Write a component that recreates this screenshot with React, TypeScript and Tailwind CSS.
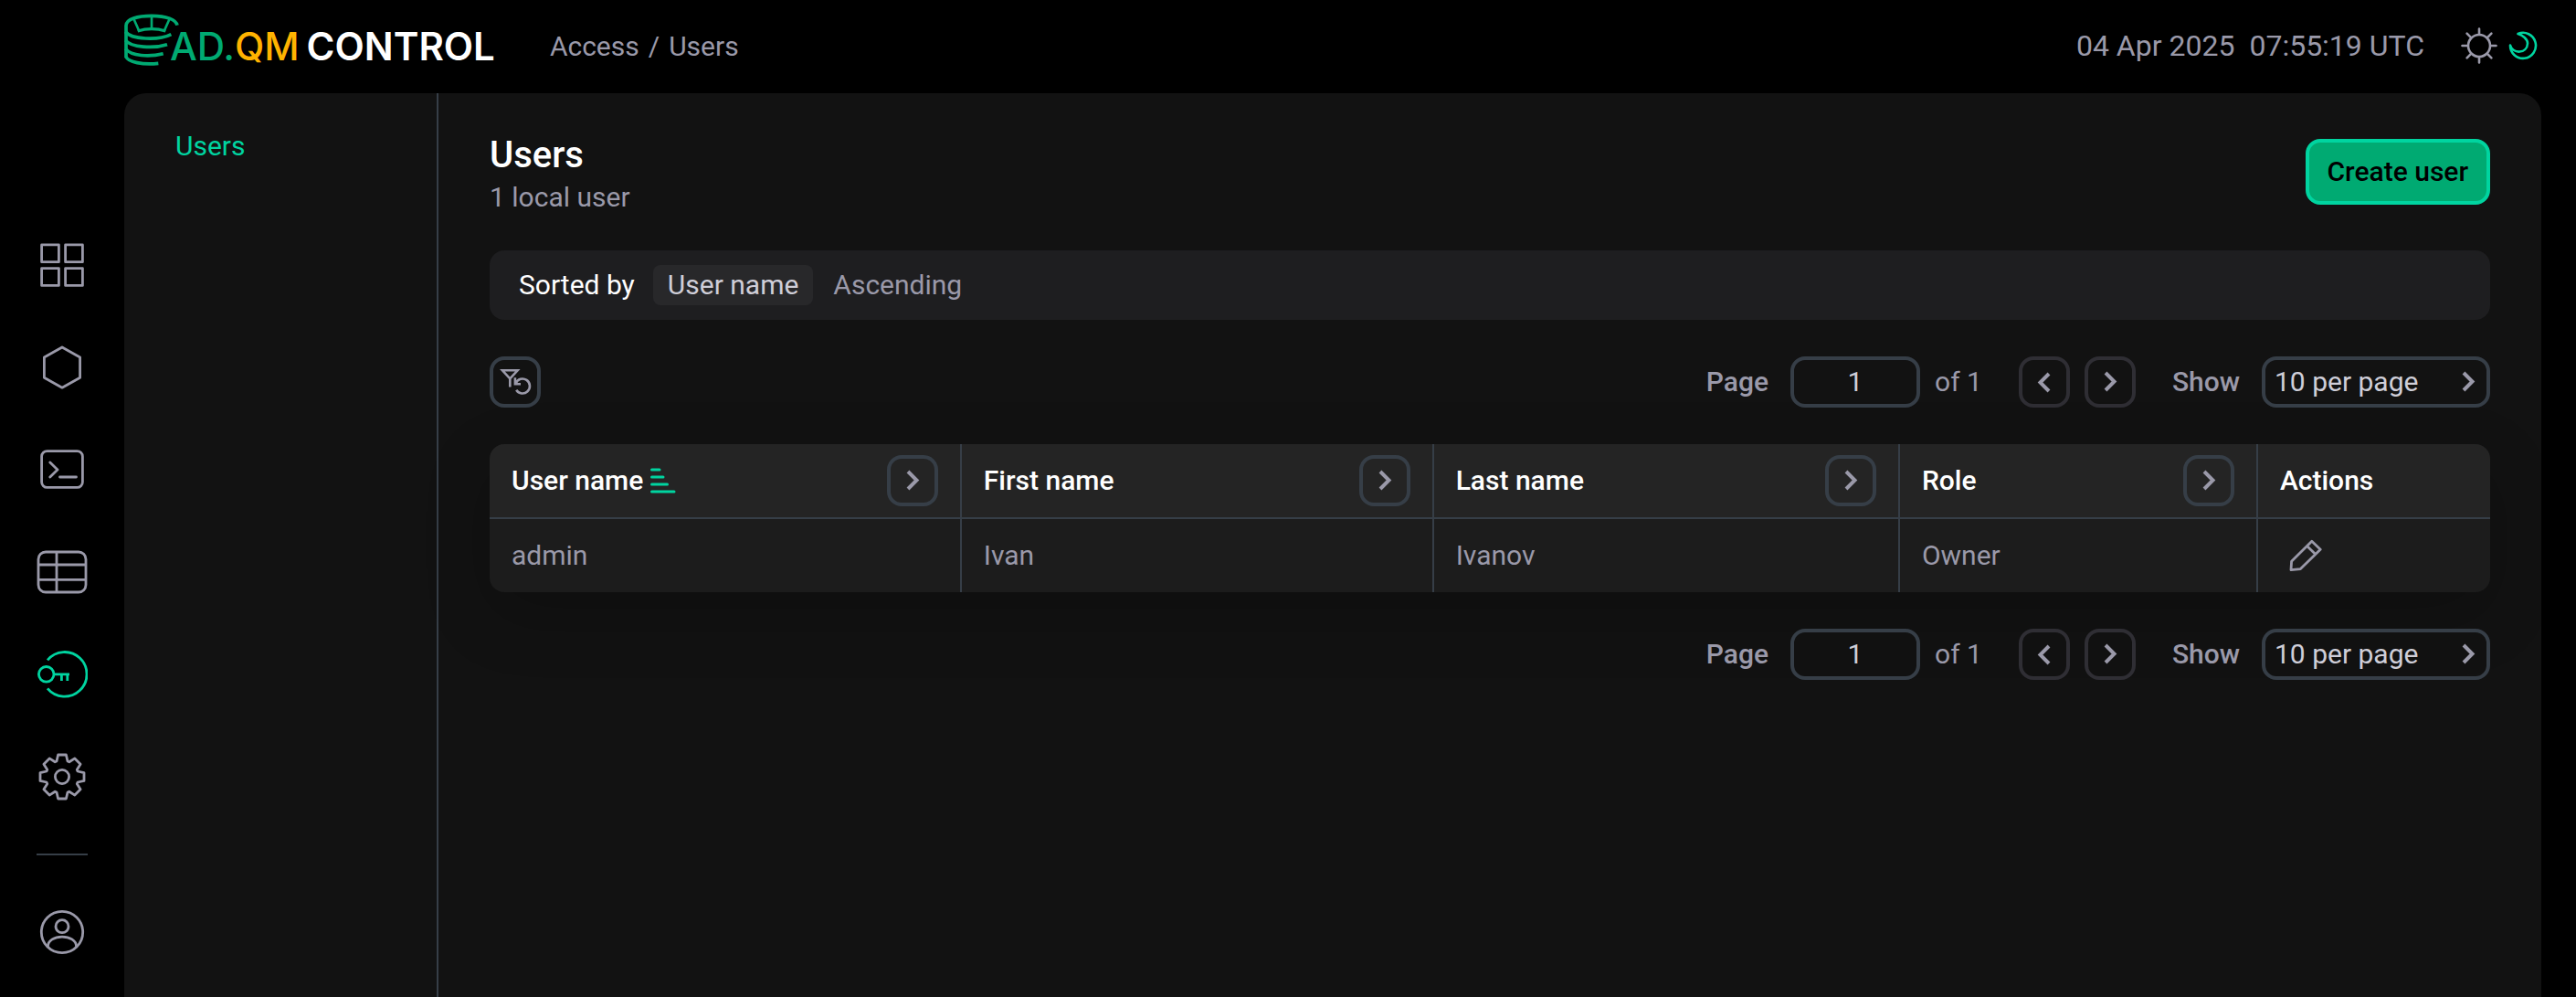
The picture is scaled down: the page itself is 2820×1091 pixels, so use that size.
import React, { useState } from 'react';

type IconName = 'dashboard' | 'clusters' | 'console' | 'tables' | 'access' | 'settings' | 'profile';

const navItems: { id: IconName; label: string }[] = [
  { id: 'dashboard', label: 'Dashboard' },
  { id: 'clusters', label: 'Clusters' },
  { id: 'console', label: 'Console' },
  { id: 'tables', label: 'Tables' },
  { id: 'access', label: 'Access' },
  { id: 'settings', label: 'Settings' },
];

const columns = [
  { key: 'userName', title: 'User name', width: 'w-[23.6%]', sorted: true },
  { key: 'firstName', title: 'First name', width: 'w-[23.6%]', sorted: false },
  { key: 'lastName', title: 'Last name', width: 'w-[23.3%]', sorted: false },
  { key: 'role', title: 'Role', width: 'w-[17.9%]', sorted: false },
] as const;

const users = [{ userName: 'admin', firstName: 'Ivan', lastName: 'Ivanov', role: 'Owner' }];

// Eight teeth around the hub, one every 45 degrees
const gearPoints = Array.from({ length: 8 }, (_, i) => {
  const a = (i * Math.PI) / 4;
  return [[-6, -17], [-4.4, -24], [4.4, -24], [6, -17]]
    .map(([x, y]) => `${(28 + x * Math.cos(a) - y * Math.sin(a)).toFixed(2)},${(28 + x * Math.sin(a) + y * Math.cos(a)).toFixed(2)}`)
    .join(' ');
}).join(' ');

const iconShapes: Record<IconName, React.ReactNode> = {
  dashboard: (
    <>
      <rect x="5.6" y="5.9" width="18.8" height="18.8" />
      <rect x="31.6" y="5.9" width="18.8" height="18.8" />
      <rect x="5.6" y="31.6" width="18.8" height="18.8" />
      <rect x="31.6" y="31.6" width="18.8" height="18.8" />
    </>
  ),
  clusters: <path d="M28 6L47.6 17V39.2L28 50.2L8.4 39.2V17Z" />,
  console: (
    <>
      <rect x="5.6" y="7.6" width="44.8" height="39.8" rx="6" />
      <path d="M14.8 20L23 28L14.8 36M25.5 36H43.5" strokeLinecap="round" />
    </>
  ),
  tables: (
    <>
      <rect x="2" y="6" width="52" height="44" rx="8" />
      <path d="M22 6V50M2 20H54M2 36.3H54" />
    </>
  ),
  access: (
    <>
      <path d="M12 12.3A24.3 24.3 0 1 1 12 43.3" />
      <circle cx="10.7" cy="27.8" r="8.3" />
      <path d="M19 27.8H36M27.4 28V35M33.8 28V35" />
    </>
  ),
  settings: (
    <>
      <polygon points={gearPoints} />
      <circle cx="28" cy="28" r="7.6" />
    </>
  ),
  profile: (
    <>
      <circle cx="28" cy="28" r="22.7" />
      <circle cx="28" cy="21.7" r="7" />
      <path d="M12.4 44.2C12 29.5 44 29.5 43.6 44.2" />
    </>
  ),
};

const NavIcon = ({ name }: { name: IconName }) => (
  <svg viewBox="0 0 56 56" className="size-14" fill="none" stroke="currentColor" strokeWidth="2.8" strokeLinejoin="round" aria-hidden="true">
    {iconShapes[name]}
  </svg>
);

const Chevron = ({ flip = false }: { flip?: boolean }) => (
  <svg viewBox="0 0 24 24" className={flip ? 'size-6 rotate-180' : 'size-6'} fill="none" stroke="currentColor" strokeWidth="4" aria-hidden="true">
    <path d="M7 2L16.5 11.5L7 21" />
  </svg>
);

const LogoMark = () => (
  <svg viewBox="18 19 180 174" className="w-[60px] h-[58px] -mr-[10px] shrink-0" fill="none" stroke="#00aa72" strokeWidth="11" aria-hidden="true">
    <path d="M24 164V58C24 36 62 26 108 26C156 26 188 38 192 57" />
    <path d="M50 38L66 74M108 26V68M166 38L150 74" strokeWidth="8" />
    <path d="M62 76Q108 62 154 76" strokeWidth="10" />
    <path d="M22 78C40 104 130 108 172 87" />
    <path d="M22 106C40 130 115 134 159 120" />
    <path d="M22 134C40 158 100 162 146 150" />
    <path d="M24 160C30 178 80 188 130 182" />
  </svg>
);

const Logo = () => (
  <a href="#" className="flex items-end pb-[14px] font-['Inter',sans-serif] text-[42px] leading-[44px]">
    <LogoMark />
    <span className="font-medium text-[#00aa72]">AD.</span>
    <span className="font-medium text-[#ffb300]">QM</span>
    <span className="ml-2 font-semibold text-white">CONTROL</span>
  </a>
);

const Sidebar = () => (
  <nav className="w-[136px] shrink-0 h-screen sticky top-0 flex flex-col items-center justify-end gap-14 pb-[43px]">
    {navItems.map((item) => (
      <a
        key={item.id}
        href={`#${item.id}`}
        aria-label={item.label}
        className={item.id === 'access' ? 'text-[#00d4a0]' : 'text-[#9a99a9] hover:text-white'}
      >
        <NavIcon name={item.id} />
      </a>
    ))}
    <div className="w-14 h-[2px] bg-[#363e47]" />
    <a href="#profile" aria-label="Profile" className="text-[#9a99a9] hover:text-white">
      <NavIcon name="profile" />
    </a>
  </nav>
);

const TopBar = () => (
  <header className="h-[102px] flex items-center justify-between">
    <div className="flex items-center gap-[60px]">
      <Logo />
      <div className="flex gap-[10px] pb-[2px] text-[30px]">
        <a href="#access">Access</a>
        <span>/</span>
        <a href="#users">Users</a>
      </div>
    </div>
    <div className="flex items-center pb-[2px]">
      <div className="flex gap-4 text-[32px]">
        <span>04 Apr 2025</span>
        <span>07:55:19 UTC</span>
      </div>
      <button type="button" aria-label="Light theme" className="ml-10">
        <svg viewBox="0 0 40 40" className="size-10" fill="none" stroke="currentColor" strokeWidth="2.6" strokeLinecap="round" aria-hidden="true">
          <circle cx="20" cy="20" r="12" />
          <path d="M20 1.5V7M20 33V38.5M1.5 20H7M33 20H38.5M6.6 6.6L10.8 10.8M29.2 29.2L33.4 33.4M6.6 33.4L10.8 29.2M29.2 10.8L33.4 6.6" />
        </svg>
      </button>
      <button type="button" aria-label="Dark theme" className="ml-3 mr-1 text-[#00d4a0]">
        <svg viewBox="0 0 32 32" className="size-8" fill="none" stroke="currentColor" strokeWidth="2.6" strokeLinejoin="round" aria-hidden="true">
          <path d="M10.5 3A14 14 0 1 1 2 15.5C4.5 25.5 20.5 25 21 13.5C21 8.5 15.5 4.5 10.5 3Z" />
        </svg>
      </button>
    </div>
  </header>
);

const Pagination = ({ id }: { id: string }) => {
  const [page, setPage] = useState('1');
  const [pageSize, setPageSize] = useState('10');

  return (
    <div className="flex items-center text-[30px]">
      <label htmlFor={`${id}-page`} className="pb-[2px] font-medium">Page</label>
      <input
        id={`${id}-page`}
        type="text"
        value={page}
        onChange={(e) => setPage(e.target.value)}
        className="ml-6 w-[142px] h-14 rounded-2xl border-4 border-[#363e47] bg-transparent pb-[2px] text-center text-[#cfced8]"
      />
      <span className="ml-4 pb-[2px]">of 1</span>
      <button type="button" aria-label="Previous page" className="ml-10 size-14 flex items-center justify-center rounded-2xl border-4 border-[#2f2e34]">
        <Chevron flip />
      </button>
      <button type="button" aria-label="Next page" className="ml-4 size-14 flex items-center justify-center rounded-2xl border-4 border-[#2f2e34]">
        <Chevron />
      </button>
      <label htmlFor={`${id}-size`} className="ml-10 pb-[2px] font-medium">Show</label>
      <div className="relative ml-6">
        <select
          id={`${id}-size`}
          value={pageSize}
          onChange={(e) => setPageSize(e.target.value)}
          className="block w-[250px] h-14 appearance-none rounded-2xl border-4 border-[#363e47] bg-transparent pb-[2px] pl-[10px] text-[#cfced8]"
        >
          <option value="10">10 per page</option>
          <option value="25">25 per page</option>
          <option value="50">50 per page</option>
        </select>
        <span className="pointer-events-none absolute right-3 top-4">
          <Chevron />
        </span>
      </div>
    </div>
  );
};

const UsersTable = () => (
  <div className="rounded-2xl overflow-hidden shadow-[0_24px_72px_rgba(0,0,0,0.2)]">
    <table className="w-full table-fixed border-separate border-spacing-0 text-left text-[30px]">
      <thead className="bg-[#242424] text-white">
        <tr className="h-[82px]">
          {columns.map((col) => (
            <th key={col.key} className={`${col.width} px-6 py-0 font-medium border-r-2 border-b-2 border-[#363e47]`}>
              <div className="flex items-center">
                <span className="pb-[2px]">{col.title}</span>
                {col.sorted && (
                  <svg viewBox="0 0 28 28" className="ml-2 size-7" stroke="#00d4a0" strokeWidth="3" strokeLinecap="round" aria-hidden="true">
                    <path d="M1.5 2H10M1.5 10H14M1.5 18H18.5M1.5 26H26" />
                  </svg>
                )}
                <button type="button" aria-label={`Filter by ${col.title}`} className="ml-auto size-14 flex items-center justify-center rounded-2xl border-4 border-[#363e47] text-[#9a99a9]">
                  <Chevron />
                </button>
              </div>
            </th>
          ))}
          <th className="px-6 pt-0 pb-[2px] font-medium border-b-2 border-[#363e47]">Actions</th>
        </tr>
      </thead>
      <tbody className="bg-[#1c1c1c]">
        {users.map((user) => (
          <tr key={user.userName} className="h-20">
            {columns.map((col) => (
              <td key={col.key} className="px-6 pt-0 pb-[2px] border-r-2 border-[#363e47]">{user[col.key]}</td>
            ))}
            <td className="px-6 py-0">
              <button type="button" aria-label={`Edit ${user.userName}`} className="size-14 flex items-center justify-center">
                <svg viewBox="0 0 36 36" className="size-9" fill="none" stroke="currentColor" strokeWidth="2.8" strokeLinejoin="round" aria-hidden="true">
                  <path d="M2 33.6L2.6 24.2L24.8 2.2L34.2 11.2L12.4 32.6Z" />
                  <path d="M19.5 7.5L28.8 16.6" />
                </svg>
              </button>
            </td>
          </tr>
        ))}
      </tbody>
    </table>
  </div>
);

const App: React.FC = () => (
  <div className="min-h-screen flex bg-black font-['Roboto',sans-serif] text-[#9a99a9]">
    <Sidebar />
    <div className="flex-1 min-w-0 flex flex-col pr-[38px]">
      <TopBar />
      <div className="flex-1 flex rounded-t-3xl bg-[#121212]">
        <aside className="w-[344px] shrink-0 border-r-2 border-[#363e47] px-14 pt-10">
          <a href="#users" className="text-[30px] leading-9 text-[#00d4a0]">Users</a>
        </aside>

        <main className="flex-1 min-w-0 flex flex-col gap-10 px-14 pt-10 pb-10">
          <div className="flex items-center justify-between">
            <div>
              <h1 className="text-[40px] leading-14 font-medium text-white">Users</h1>
              <p className="text-[30px] leading-9">1 local user</p>
            </div>
            <button type="button" className="h-[72px] px-5 pb-[2px] rounded-2xl border-4 border-[#00d4a0] bg-[#00aa72] text-[30px] font-medium text-black">
              Create user
            </button>
          </div>

          <div className="h-[76px] flex items-center rounded-2xl bg-[#1e1e20] px-8 text-[30px]">
            <span className="pb-[2px] text-white">Sorted by</span>
            <span className="ml-5 h-11 flex items-center rounded-lg bg-[#28282a] px-4 pb-[2px] text-[#cfced8]">User name</span>
            <span className="ml-[22px] pb-[2px]">Ascending</span>
          </div>

          <div className="flex items-center justify-between">
            <button type="button" aria-label="Reset filters" className="size-14 flex items-center justify-center rounded-2xl border-4 border-[#363e47]">
              <svg viewBox="0 0 36 36" className="size-9 shrink-0" fill="none" stroke="currentColor" strokeWidth="2.6" aria-hidden="true">
                <path d="M4 5.3H20.6L12.3 14.3ZM12.3 14V23.5" />
                <path d="M17.9 13.2V20.2H24M18.6 19.4A8 8 0 1 1 19.2 26.8" />
              </svg>
            </button>
            <Pagination id="top" />
          </div>

          <UsersTable />

          <div className="flex justify-end">
            <Pagination id="bottom" />
          </div>
        </main>
      </div>
    </div>
  </div>
);

export default App;
